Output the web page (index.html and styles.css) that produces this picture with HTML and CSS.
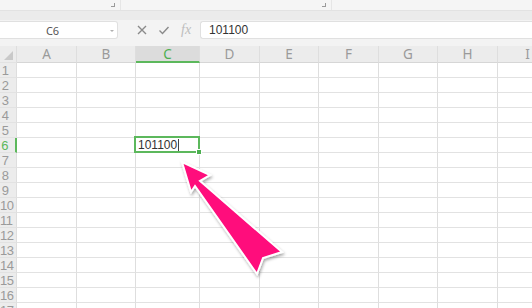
FILE: index.html
```html
<!DOCTYPE html>
<html lang="en">
  <head>
    <meta charset="UTF-8" />
    <meta name="viewport" content="width=device-width, initial-scale=1.0" />
    <title>Sheet</title>
    <link rel="stylesheet" href="styles.css">
  </head>
  <body>
    <div class="ribbon">
      <div class="group g1"><span class="launcher"></span></div>
      <div class="group g2"><span class="launcher"></span></div>
      <div class="group g3"></div>
    </div>
    <div class="ribbon-edge"></div>

    <div class="formula-bar">
      <div class="name-box">
        <span>C6</span>
        <span class="caret"></span>
      </div>
      <div class="tools">
        <svg width="12" height="12" viewBox="0 0 12 12"><path d="M2 2 L10 10 M10 2 L2 10" stroke="#8a8a8a" stroke-width="1.4" fill="none"/></svg>
        <svg width="12" height="12" viewBox="0 0 12 12"><path d="M1.5 6.5 L4.5 9.5 L10.5 3" stroke="#8a8a8a" stroke-width="1.4" fill="none"/></svg>
        <span class="fx">fx</span>
      </div>
      <div class="formula-input">101100</div>
    </div>

    <div class="sheet" id="sheet"></div>

    <svg class="arrow" width="532" height="308" viewBox="0 0 532 308">
      <defs>
        <filter id="shadow" x="-20%" y="-20%" width="140%" height="140%">
          <feDropShadow dx="1" dy="2" stdDeviation="1.6" flood-color="#000" flood-opacity="0.35"/>
        </filter>
      </defs>
      <polygon points="182,162 210,175 200,181 282,252 263,258 257,274 195,186 191,192"
               fill="#ff0a7c" stroke="#fff" stroke-width="2" stroke-linejoin="miter" filter="url(#shadow)"/>
    </svg>

    <script>
      const cols = ["A", "B", "C", "D", "E", "F", "G", "H", "I"];
      const sheet = document.getElementById("sheet");

      function cell(cls, text) {
        const div = document.createElement("div");
        div.className = cls;
        if (text) div.textContent = text;
        sheet.appendChild(div);
        return div;
      }

      // header row
      cell("corner", "");
      cols.forEach(function (c) {
        cell(c === "C" ? "col-head active" : "col-head", c);
      });

      // rows
      for (let r = 1; r <= 17; r++) {
        cell(r === 6 ? "row-head active" : "row-head", String(r));
        cols.forEach(function (c) {
          const div = cell("cell", "");
          if (r === 6 && c === "C") {
            div.classList.add("selected");
            div.innerHTML = '<span class="value">101100</span><span class="cursor"></span><span class="frame"></span><span class="handle"></span>';
          }
        });
      }
    </script>
  </body>
</html>
```

FILE: styles.css
```css
body {
  margin: 0;
  width: 532px;
  height: 308px;
  overflow: hidden;
  position: relative;
  font-family: "Noto Sans", "Liberation Sans", sans-serif;
  background: #f3f3f3;
}

.ribbon {
  display: flex;
  height: 10px;
  background: #f5f5f5;
}

.group {
  position: relative;
  border-right: 1px solid #e6e6e6;
}

.g1 { width: 120px; }
.g2 { width: 210px; }
.g3 { flex: 1; border-right: none; }

.launcher {
  position: absolute;
  right: 5px;
  top: 3px;
  width: 3px;
  height: 3px;
  border-right: 1px solid #9a9a9a;
  border-bottom: 1px solid #9a9a9a;
}

.ribbon-edge {
  height: 10px;
  background: #ebebeb;
  border-top: 1px solid #e2e2e2;
  box-sizing: border-box;
}

.formula-bar {
  display: flex;
  align-items: flex-start;
  height: 26px;
  padding-top: 1px;
  box-sizing: border-box;
  background: #f3f3f3;
}

.name-box {
  width: 118px;
  height: 18px;
  box-sizing: border-box;
  background: #fff;
  border: 1px solid #e0e0e0;
  border-left: none;
  border-radius: 0 3px 3px 0;
  display: flex;
  align-items: center;
  justify-content: center;
  padding-right: 12px;
  position: relative;
  font-size: 11px;
  color: #555;
}

.caret {
  position: absolute;
  right: 3px;
  top: 8px;
  width: 0;
  height: 0;
  border-left: 2px solid transparent;
  border-right: 2px solid transparent;
  border-top: 2px solid #b0b0b0;
}

.tools {
  display: flex;
  align-items: center;
  height: 18px;
  gap: 10px;
  padding-left: 18px;
  width: 82px;
  box-sizing: border-box;
}

.fx {
  font-family: "Liberation Serif", serif;
  font-style: italic;
  font-size: 14px;
  color: #bdbdbd;
  margin-left: 1px;
}

.formula-input {
  flex: 1;
  height: 18px;
  box-sizing: border-box;
  background: #fff;
  border: 1px solid #e0e0e0;
  border-right: none;
  border-radius: 3px 0 0 3px;
  padding-left: 8px;
  font-family: "Liberation Sans", sans-serif;
  font-size: 12px;
  line-height: 16px;
  color: #333;
}

.sheet {
  display: grid;
  grid-template-columns: 17px 60px 59px 64px 60px 59px 60px 59px 60px 60px;
  grid-template-rows: 17px;
  grid-auto-rows: 15px;
  background: #fff;
  font-family: "Liberation Sans", sans-serif;
  font-size: 12px;
  line-height: 14px;
}

.sheet > div {
  box-sizing: border-box;
  border-right: 1px solid #dedede;
  border-bottom: 1px solid #e2e2e2;
}

.corner,
.col-head,
.row-head {
  background: #ececec;
  color: #9a9a9a;
}

.corner {
  position: relative;
}

.corner::after {
  content: "";
  position: absolute;
  right: 3px;
  bottom: 2px;
  width: 0;
  height: 0;
  border-left: 9px solid transparent;
  border-bottom: 9px solid #c9c9c9;
}

.col-head {
  font-family: "Noto Sans", sans-serif;
  font-size: 13.5px;
  line-height: 17px;
  text-align: center;
  border-bottom: 1px solid #d6d6d6 !important;
}

.col-head.active {
  background: #dcdcdc;
  color: #4caf50;
  border-bottom: 2px solid #5cb85c !important;
}

.row-head {
  font-size: 13px;
  line-height: 15px;
  text-align: center;
  padding-right: 6px;
  white-space: nowrap;
  letter-spacing: -0.5px;
}

.row-head.active {
  color: #5cb85c;
  border-right: 2px solid #5cb85c;
}

.cell.selected {
  position: relative;
}

.value {
  color: #333;
  padding-left: 2px;
}

.cursor {
  display: inline-block;
  width: 1px;
  height: 12px;
  margin-left: 1px;
  vertical-align: -2px;
  background: #444;
}

.frame {
  position: absolute;
  left: -2px;
  top: -2px;
  right: -1px;
  bottom: -1px;
  border: 2px solid #5cb85c;
}

.handle {
  position: absolute;
  right: -3px;
  bottom: -3px;
  width: 4px;
  height: 4px;
  background: #4caf50;
  border: 1px solid #fff;
}

.arrow {
  position: absolute;
  left: 0;
  top: 0;
  pointer-events: none;
}
```
